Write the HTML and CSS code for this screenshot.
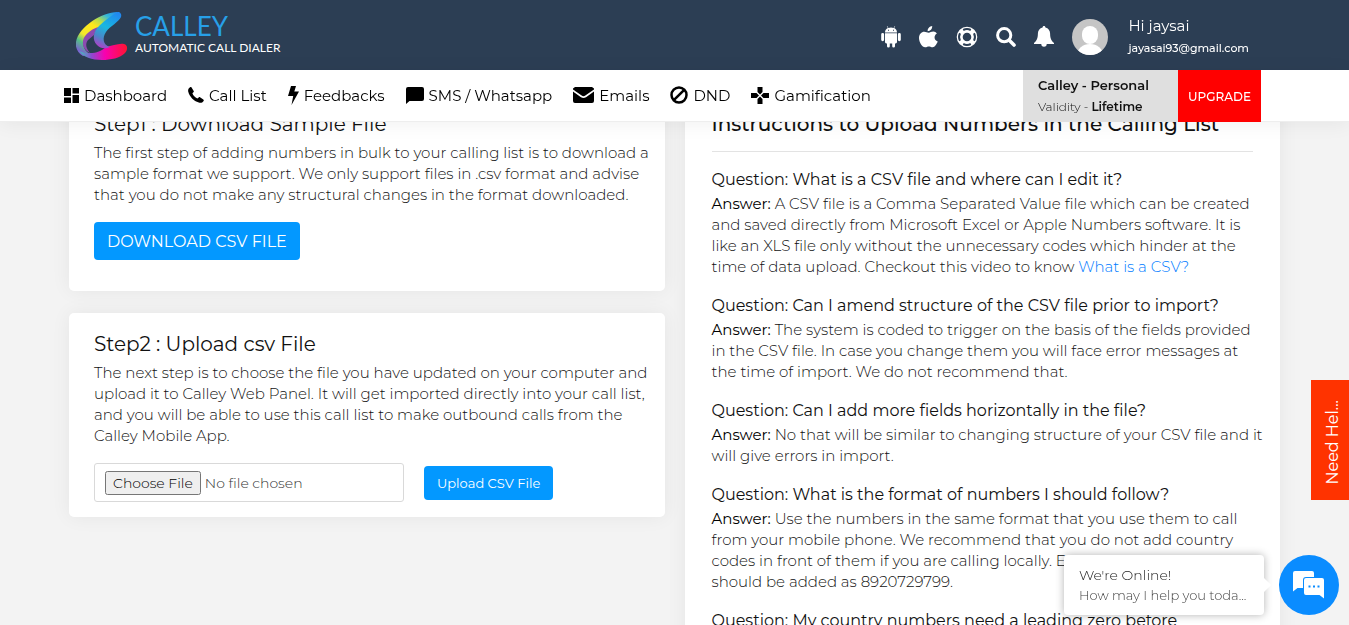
FILE: index.html
```
<!DOCTYPE html>
<html lang="en">
  <head>
    <meta charset="UTF-8" />
    <meta name="viewport" content="width=device-width, initial-scale=1" />
    <title>Calley - Upload CSV</title>
    <link rel="stylesheet" href="styles.css">
  </head>
  <body>
    <header class="site-header">
      <div class="topbar">
        <a href="#" class="logo">
          <svg class="logo-mark" viewBox="0 0 52 50" aria-hidden="true">
            <defs>
              <linearGradient id="outer" gradientUnits="userSpaceOnUse" x1="44" y1="2" x2="14" y2="47">
                <stop offset="0" stop-color="#1f86f0" />
                <stop offset="0.18" stop-color="#35b8d8" />
                <stop offset="0.32" stop-color="#b4dc50" />
                <stop offset="0.46" stop-color="#ffe81a" />
                <stop offset="0.7" stop-color="#f2e82c" />
                <stop offset="0.84" stop-color="#55c088" />
                <stop offset="1" stop-color="#7a62d0" />
              </linearGradient>
              <linearGradient id="lower" gradientUnits="userSpaceOnUse" x1="6" y1="40" x2="51" y2="36">
                <stop offset="0" stop-color="#52a8c0" />
                <stop offset="0.2" stop-color="#8c4bd0" />
                <stop offset="0.5" stop-color="#f800b0" />
                <stop offset="1" stop-color="#ff1430" />
              </linearGradient>
              <linearGradient id="inner" gradientUnits="userSpaceOnUse" x1="26" y1="38" x2="44" y2="4">
                <stop offset="0" stop-color="#b43cc8" />
                <stop offset="0.25" stop-color="#4b86c8" />
                <stop offset="0.55" stop-color="#18b8e0" />
                <stop offset="1" stop-color="#2188f0" />
              </linearGradient>
            </defs>
            <path d="M41 1C27 1 3 15 0 31c-1 6 2 11 7 14l7-2C5 38 5 27 16 20L40 7c4-2 5-5 1-6z" fill="url(#outer)" />
            <path d="M7 30c1-6 7-11 15-14l-4 8-6 5c-3 4-2 8 2 13-4-2-8-6-7-12z" fill="#8b4bb0" />
            <path d="M3 40c4 1 7 3 11 2 7 0 11-2 16-6 6-1 13-4 18-3 4 1 4 6 1 9-5 5-14 7-23 7C16 49 7 46 3 40z" fill="url(#lower)" />
            <path d="M42 1c-6 3-13 8-19 14-6 6-7 14-2 19 4 4 8 4 13 2-7-2-8-9-4-15 4-6 13-10 15-15 1-3-1-5-3-5z" fill="url(#inner)" />
          </svg>
          <span class="logo-text">
            <span class="logo-name">CALLEY</span>
            <span class="logo-tag">AUTOMATIC CALL DIALER</span>
          </span>
        </a>
        <div class="tools">
          <a href="#" class="tool" aria-label="Android app">
            <svg width="20" height="22" viewBox="0 0 20 22" fill="#fff"><path d="M4 7.3h12V16a1.4 1.4 0 0 1-1.4 1.4H14v2.8a1.4 1.4 0 0 1-2.8 0v-2.8H8.8v2.8a1.4 1.4 0 0 1-2.8 0v-2.800h-.6A1.4 1.4 0 0 1 4 16zM1.6 7a1.4 1.4 0 0 1 1.5 1.4v5.3a1.4 1.4 0 0 1-2.9 0V8.4A1.4 1.4 0 0 1 1.6 7zm16.800 0a1.400 1.400 0 0 1 1.400 1.400v5.300a1.400 1.400 0 0 1-2.900 0V8.400A1.400 1.400 0 0 1 18.400 7zM4 6.500c0-2 1.100-3.500 2.900-4.400L5.800.3l.4-.2 1.200 1.800a7.500 7.500 0 0 1 5.200 0L13.800.1l.4.2-1.100 1.800C14.900 3 16 4.500 16 6.500z" /><path d="M7 3.800h1v1H7zM12 3.800h1v1h-1z" fill="#2c3e54" /></svg>
          </a>
          <a href="#" class="tool" aria-label="iPhone app">
            <svg width="19" height="22" viewBox="0 0 19 22" fill="#fff"><path d="M13.2 0c.2 3-1.9 5.200-4.500 5.200C8.400 2.500 10.700.3 13.200 0zM17.900 7.600c-3.400 2-3 6.600.8 8-.8 2.300-2.900 5.700-5 5.700-1.500 0-2.100-.8-3.800-.8s-2.300.8-3.800.8C3.200 21.300 0 16.200 0 12c0-4 2.600-6.300 5.200-6.300 1.900 0 3 1 4.500 1 1.300 0 2.500-1.100 4.700-1.100 1.400 0 2.700.7 3.500 2z" /></svg>
          </a>
          <a href="#" class="tool" aria-label="Support">
            <svg width="22" height="22" viewBox="0 0 22 22" fill="none"><circle cx="11" cy="11" r="7.3" stroke="#fff" stroke-width="6" /><path d="M7.200 4a8.300 8.300 0 0 1 7.600 0M7.200 18a8.300 8.300 0 0 0 7.600 0M4 7.200a8.300 8.300 0 0 0 0 7.600M18 7.200a8.300 8.300 0 0 1 0 7.600" stroke="#2c3e54" stroke-width="2" /></svg>
          </a>
          <a href="#" class="tool" aria-label="Search">
            <svg width="20" height="20" viewBox="0 0 20 20" fill="none" stroke="#fff" stroke-linecap="round"><circle cx="8.200" cy="8.200" r="6.600" stroke-width="3" /><path d="M13.500 13.500l4.500 4.500" stroke-width="3.600" /></svg>
          </a>
          <a href="#" class="tool" aria-label="Notifications">
            <svg width="20" height="22" viewBox="0 0 20 22" fill="#fff"><path d="M10 0c.9 0 1.400.6 1.400 1.500 3 .7 4.700 3 4.700 6 0 5.300 1.600 7.500 3.900 9.500v1H0v-1c2.300-2 3.900-4.200 3.900-9.500 0-3 1.700-5.300 4.700-6C8.600.6 9.100 0 10 0zM7.300 18h5.400a2.700 2.700 0 0 1-5.400 0z" /></svg>
          </a>
          <svg class="avatar" viewBox="0 0 36 36" aria-hidden="true"><clipPath id="round"><circle cx="18" cy="18" r="18" /></clipPath><g clip-path="url(#round)"><path d="M0 0h36v36H0z" fill="#c5c5c5" /><rect x="10" y="7" width="16" height="18" rx="8" fill="#fff" /><ellipse cx="18" cy="36" rx="13" ry="11" fill="#fff" /></g></svg>
          <div class="user">
            <div class="user-name">Hi jaysai</div>
            <div class="user-mail">jayasai93@gmail.com</div>
          </div>
        </div>
      </div>

      <div class="navbar">
        <nav class="nav">
          <a href="#"><svg width="15" height="15" viewBox="0 0 15 15"><path d="M0 0h7v8H0zM0 9.500h7V15H0zM8.500 0H15v5.500H8.500zM8.500 7H15v8H8.500z" /></svg>Dashboard</a>
          <a href="#"><svg width="16" height="16" viewBox="0 0 16 16"><path d="M3.400.3l2.300 3.600c.3.600.1 1-.3 1.400l-1 1c.8 2.300 2.500 4.200 5 5.200l1.300-1.100c.4-.4.9-.4 1.300-.1l3.300 2.200c.6.400.7.900.3 1.400-1 1.600-2.700 2.300-4.800 1.700C5.700 14.200 1.500 9.700.2 4.600-.2 2.700.7 1 2.400.1c.4-.2.8-.1 1 .2z" /></svg>Call List</a>
          <a href="#"><svg width="11" height="19" viewBox="0 0 11 19"><path d="M3 0h5L6.300 5.500H11L3.500 19l1.700-9H0z" /></svg>Feedbacks</a>
          <a href="#"><svg width="18" height="17" viewBox="0 0 18 17"><path d="M2 0h14a2 2 0 0 1 2 2v10a2 2 0 0 1-2 2H3.500L0 17V2a2 2 0 0 1 2-2z" /></svg>SMS / Whatsapp</a>
          <a href="#"><svg width="21" height="16" viewBox="0 0 21 16"><path d="M2 0h17l2 1.500v1L12.300 8.600c-1.200.8-2.400.8-3.600 0L0 2.500v-1zM0 4.500l8 5.700c1.800 1 3.200 1 5 0l8-5.700V14a2 2 0 0 1-2 2H2a2 2 0 0 1-2-2z" /></svg>Emails</a>
          <a href="#"><svg width="18" height="18" viewBox="0 0 18 18" fill="none" stroke="#000" stroke-width="2.500"><circle cx="9" cy="9" r="7.500" /><path d="M14.200 3.800L3.800 14.200" /></svg>DND</a>
          <a href="#"><svg width="18" height="17" viewBox="0 0 18 17"><path d="M6.500 0h5v5L9 7.500 6.500 5zM6.500 17h5v-5L9 9.500 6.500 12zM0 6h5.500L8 8.500 5.500 11H0zM18 6h-5.500L10 8.500l2.500 2.500H18z" /></svg>Gamification</a>
        </nav>
        <div class="plan">
          <div class="plan-info">
            <strong>Calley - Personal</strong>
            <span class="validity">Validity - <b>Lifetime</b></span>
          </div>
          <button type="button" class="upgrade">UPGRADE</button>
        </div>
      </div>
    </header>

    <main class="content">
      <div class="steps">
        <section class="card">
          <h2>Step1 : Download Sample File</h2>
          <p>The first step of adding numbers in bulk to your calling list is to download a sample format we support. We only support files in .csv format and advise that you do not make any structural changes in the format downloaded.</p>
          <button type="button" class="btn btn-download">DOWNLOAD CSV FILE</button>
        </section>
        <section class="card">
          <h2>Step2 : Upload csv File</h2>
          <p>The next step is to choose the file you have updated on your computer and upload it to Calley Web Panel. It will get imported directly into your call list, and you will be able to use this call list to make outbound calls from the Calley Mobile App.</p>
          <form class="upload">
            <input type="file" aria-label="CSV file" />
            <button type="button" class="btn">Upload CSV File</button>
          </form>
        </section>
      </div>

      <section class="card help">
        <h2>Instructions to Upload Numbers in the Calling List</h2>
        <h3>Question: What is a CSV file and where can I edit it?</h3>
        <p><b>Answer:</b> A CSV file is a Comma Separated Value file which can be created and saved directly from Microsoft Excel or Apple Numbers software. It is like an XLS file only without the unnecessary codes which hinder at the time of data upload. Checkout this video to know <a href="#">What is a CSV?</a></p>
        <h3>Question: Can I amend structure of the CSV file prior to import?</h3>
        <p><b>Answer:</b> The system is coded to trigger on the basis of the fields provided in the CSV file. In case you change them you will face error messages at the time of import. We do not recommend that.</p>
        <h3>Question: Can I add more fields horizontally in the file?</h3>
        <p><b>Answer:</b> No that will be similar to changing structure of your CSV file and it will give errors in import.</p>
        <h3>Question: What is the format of numbers I should follow?</h3>
        <p><b>Answer:</b> Use the numbers in the same format that you use them to call from your mobile phone. We recommend that you do not add country codes in front of them if you are calling locally. Ex<br>should be added as 8920729799.</p>
        <h3>Question: My country numbers need a leading zero before</h3>
      </section>
    </main>

    <!-- Floating widgets -->
    <button type="button" class="need-help">Need Hel...</button>
    <div class="chat-bubble">
      <div class="chat-title">We're Online!</div>
      <div class="chat-text">How may I help you toda...</div>
    </div>
    <button type="button" class="chat-button" aria-label="Open chat">
      <svg width="32" height="28" viewBox="0 0 32 28"><path d="M2 0h17a2 2 0 0 1 2 2v4h-8a3 3 0 0 0-3 3v8H4.500L0 20.500V2a2 2 0 0 1 2-2z" fill="#fff" /><path d="M13 7h16a2 2 0 0 1 2 2v18.500L26.500 24H13a2 2 0 0 1-2-2V9a2 2 0 0 1 2-2z" fill="#fff" /><path d="M15.500 14.500h2v2h-2zM20 14.500h2v2h-2zM24.500 14.500h2v2h-2z" fill="#0a8cff" /></svg>
    </button>
  </body>
</html>
```
FILE: styles.css
```
* {
  box-sizing: border-box;
}
body {
  margin: 0;
  font-family: Montserrat, Inter, sans-serif;
  font-size: 15px;
  font-weight: 300;
  line-height: 21px;
  color: #111;
  background-color: #f3f3f3;
}
a {
  color: #007bff;
  text-decoration: none;
}
button {
  font-family: inherit;
  border: none;
  cursor: pointer;
}

/* Header */
.site-header {
  position: fixed;
  top: 0;
  left: 0;
  right: 0;
  z-index: 10;
}
.topbar {
  display: flex;
  align-items: center;
  justify-content: space-between;
  height: 70px;
  padding: 0 100px 0 76px;
  background-color: #2c3e54;
  color: #fff;
}
.logo {
  display: flex;
  align-items: center;
  gap: 7px;
  padding-top: 2px;
}
.logo-mark {
  width: 52px;
  height: 50px;
}
.logo-text {
  display: flex;
  flex-direction: column;
  padding-bottom: 4px;
  font-family: Lato, sans-serif;
}
.logo-name {
  font-size: 26px;
  line-height: 28px;
  font-weight: 400;
  color: #27a0e8;
}
.logo-tag {
  font-size: 12px;
  line-height: 16px;
  font-weight: 400;
  color: #fff;
}
.tools {
  display: flex;
  align-items: center;
  gap: 18px;
  padding-top: 4px;
}
.tool {
  display: flex;
}
.avatar {
  width: 36px;
  height: 36px;
}
.user {
  margin-left: 2px;
  font-weight: 400;
}
.user-name {
  font-size: 15px;
  line-height: 22px;
}
.user-mail {
  font-size: 11px;
  line-height: 22px;
  font-weight: 500;
}
.navbar {
  display: flex;
  align-items: flex-start;
  justify-content: space-between;
  height: 52px;
  padding: 0 88px 0 64px;
  background-color: #fff;
  border-bottom: 1px solid #eee;
  box-shadow: 0 2px 20px rgba(0, 0, 0, 0.06);
}
.nav {
  display: flex;
  gap: 21px;
  height: 50px;
}
.nav a {
  display: flex;
  align-items: center;
  gap: 5px;
  color: #000;
  font-size: 15px;
  font-weight: 400;
  white-space: nowrap;
}
.plan {
  display: flex;
  height: 52px;
}
.plan-info {
  display: flex;
  flex-direction: column;
  justify-content: center;
  width: 155px;
  padding-left: 15px;
  background-color: #dfdfdf;
  font-size: 13px;
}
.plan-info strong,
.plan-info b {
  font-weight: 600;
}
.validity {
  font-size: 12px;
}
.upgrade {
  width: 83px;
  padding: 0;
  background-color: #ff0000;
  color: #fff;
  font-size: 12px;
  font-weight: 500;
}

/* Page content */
.content {
  display: grid;
  grid-template-columns: 1fr 1fr;
  gap: 20px;
  padding: 93px 69px 0;
}
.steps {
  display: flex;
  flex-direction: column;
  gap: 22px;
}
.card {
  padding: 19px 11px 15px 25px;
  background-color: #fff;
  border-radius: 5px;
  box-shadow: 0 0 20px rgba(0, 0, 0, 0.06);
}
.steps .card:first-child {
  padding-bottom: 31px;
}
h2 {
  margin: 0 0 6px;
  font-size: 20px;
  line-height: 24px;
  font-weight: 400;
}
h3 {
  margin: 0;
  font-size: 16px;
  line-height: 26px;
  font-weight: 400;
}
p {
  margin: 0 0 16px;
}
.steps p {
  margin-bottom: 17px;
}
p b {
  font-weight: 400;
  color: #000;
}
.btn {
  height: 34px;
  padding: 0 13px;
  border-radius: 4px;
  background-color: #0398ff;
  color: #fff;
  font-size: 13px;
  font-weight: 400;
}
.btn-download {
  height: 38px;
  font-size: 16px;
}
.upload {
  display: flex;
  align-items: center;
  gap: 20px;
}
.upload input {
  width: 310px;
  height: 39px;
  padding: 7px 10px;
  border: 1px solid #d9d9d9;
  border-radius: 3px;
  font: inherit;
  font-size: 14px;
  color: #333;
}
.upload input::file-selector-button {
  font: inherit;
}
.help {
  padding: 19px 16px 19px 27px;
}
.help h2 {
  margin: 0 11px 15px 0;
  padding-bottom: 15px;
  border-bottom: 1px solid #e3e3e3;
  font-weight: 500;
}

/* Floating widgets */
.need-help {
  position: fixed;
  top: 380px;
  right: 0;
  width: 38px;
  height: 120px;
  padding: 4px 0 0 4px;
  background-color: #ff3300;
  color: #fff;
  font-size: 16px;
  writing-mode: sideways-lr;
}
.chat-bubble {
  position: fixed;
  right: 85px;
  bottom: 10px;
  width: 200px;
  padding: 10px 15px;
  background-color: #fff;
  border-radius: 4px;
  box-shadow: 0 0 8px rgba(0, 0, 0, 0.3);
  white-space: nowrap;
}
.chat-bubble::after {
  content: "";
  position: absolute;
  right: -5px;
  top: 25px;
  width: 10px;
  height: 10px;
  background-color: #fff;
  transform: rotate(45deg);
}
.chat-title {
  font-size: 14px;
  line-height: 20px;
  color: #222;
}
.chat-text {
  font-size: 13px;
  line-height: 20px;
  color: #444;
}
.chat-button {
  position: fixed;
  right: 10px;
  bottom: 10px;
  display: flex;
  align-items: center;
  justify-content: center;
  width: 60px;
  height: 60px;
  padding: 0;
  border-radius: 50%;
  background-color: #0a8cff;
}
```
